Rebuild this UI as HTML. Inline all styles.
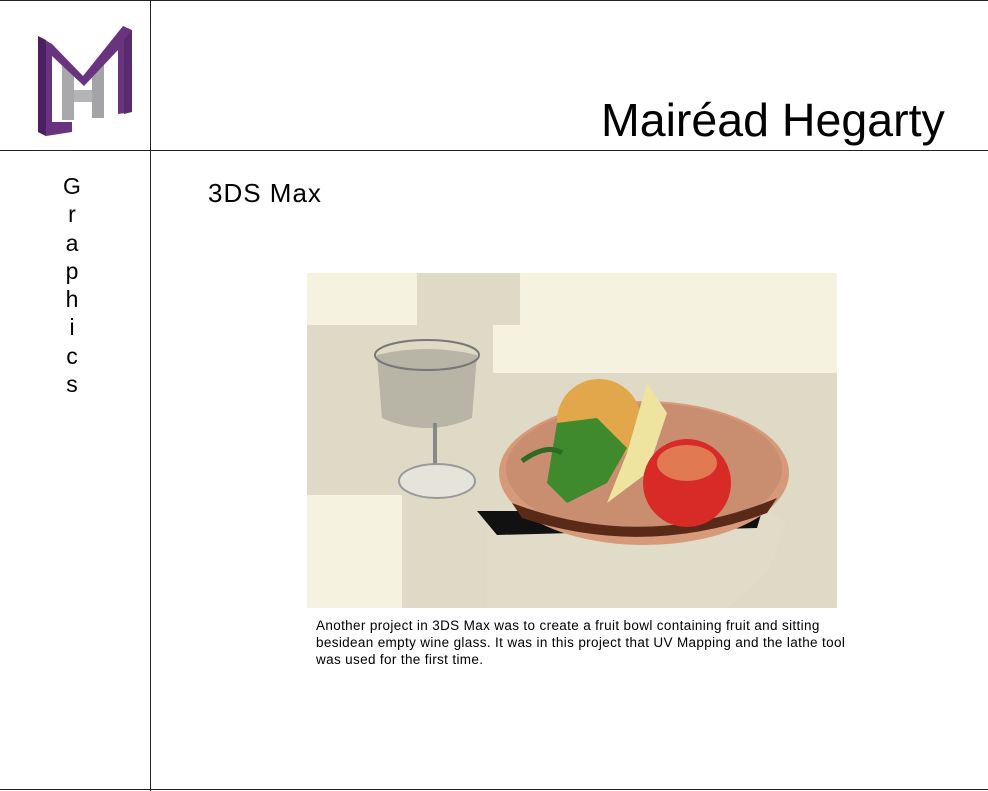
<!DOCTYPE html>
<html><head><meta charset="utf-8"><style>
html,body{margin:0;padding:0;background:#fff;width:988px;height:791px;overflow:hidden;position:relative;font-family:"Liberation Sans",Arial,sans-serif;color:#000}
.l{position:absolute;background:#222}
</style></head><body>
<div class="l" style="left:0;top:0;width:988px;height:1px"></div>
<div class="l" style="left:0;top:150px;width:988px;height:1px"></div>
<div class="l" style="left:150px;top:0;width:1px;height:791px"></div>
<div class="l" style="left:0;top:789px;width:988px;height:1px"></div>

<svg style="position:absolute;left:30px;top:20px" width="110" height="122" viewBox="30 20 110 122">
  <polygon points="62,64 74,70 74,120 62,120" fill="#a9a9ab"/>
  <polygon points="92,66 104,60 104,118 92,118" fill="#a4a4a6"/>
  <rect x="74" y="90" width="18" height="12" fill="#b4b4b6"/>
  <polygon points="38,36 52,44 83,76 123,26 132,30 132,112 118,114 118,50 84,86 52,56 52,122 72,122 72,132 46,136 38,132" fill="#6a3380"/>
  <polygon points="38,36 46,40 46,136 38,132" fill="#4d1f60"/>
  <polygon points="124,40 132,30 132,112 124,114" fill="#5a2a6e"/>
</svg>

<div style="position:absolute;left:601px;top:94px;font-size:46.5px;line-height:52px;white-space:nowrap">Mairéad Hegarty</div>

<div style="position:absolute;left:60px;top:172px;width:24px;text-align:center;font-size:23px;line-height:28.3px">G<br>r<br>a<br>p<br>h<br>i<br>c<br>s</div>

<div style="position:absolute;left:208px;top:178px;font-size:26px;letter-spacing:1px;line-height:30px">3DS Max</div>

<svg style="position:absolute;left:307px;top:273px" width="530" height="335" viewBox="0 0 530 335">
  <rect width="530" height="335" fill="#dedac6"/>
  <rect x="0" y="0" width="110" height="52" fill="#f5f2df"/>
  <rect x="213" y="0" width="317" height="52" fill="#f5f2df"/>
  <rect x="186" y="52" width="344" height="48" fill="#f5f2df"/>
  <rect x="0" y="222" width="95" height="113" fill="#f5f2df"/>
  <path d="M180 240 Q200 230 260 235 L450 230 L480 250 L460 300 L420 335 L180 335 Z" fill="#e0dcc8"/>
  <path d="M170 238 L455 238 L450 255 L190 262 Z" fill="#111"/>
  <ellipse cx="337" cy="200" rx="145" ry="72" fill="#d69a7a"/>
  <ellipse cx="337" cy="196" rx="138" ry="66" fill="#c98e6f"/>
  <path d="M205 230 Q337 280 470 225 L460 240 Q337 285 215 245 Z" fill="#5a2a18"/>
  <circle cx="292" cy="148" r="42" fill="#e2a74b"/>
  <path d="M340 110 L360 140 L340 200 L300 230 L320 180 Z" fill="#efe3a0"/>
  <path d="M250 150 L290 145 L320 175 L300 210 L260 230 L240 210 Z" fill="#3e8a2c"/>
  <path d="M215 188 Q240 170 255 180" stroke="#2f6a22" stroke-width="5" fill="none"/>
  <circle cx="380" cy="210" r="44" fill="#d82a26"/>
  <ellipse cx="380" cy="190" rx="30" ry="18" fill="#e8b070" opacity=".6"/>
  <path d="M70 82 Q120 70 170 82 L165 145 Q120 165 75 145 Z" fill="#aeaa9d" opacity=".8"/>
  <ellipse cx="120" cy="82" rx="52" ry="15" fill="none" stroke="#777" stroke-width="2"/>
  <rect x="126" y="150" width="4" height="52" fill="#888"/>
  <ellipse cx="130" cy="208" rx="38" ry="17" fill="#e6e4da" stroke="#999" stroke-width="2"/>
</svg>

<div style="position:absolute;left:316px;top:617px;width:600px;font-size:13.5px;letter-spacing:.35px;line-height:17px;white-space:nowrap">Another project in 3DS Max was to create a fruit bowl containing fruit and sitting<br>besidean empty wine glass. It was in this project that UV Mapping and the lathe tool<br>was used for the first time.</div>
</body></html>
